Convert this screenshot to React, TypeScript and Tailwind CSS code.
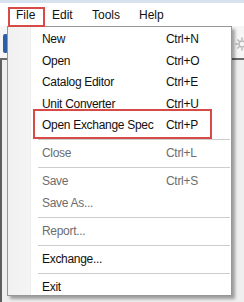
import React from 'react'

type Entry =
  | { kind: 'item'; label: string; shortcut?: string; disabled?: boolean }
  | { kind: 'sep' }

const entries: Entry[] = [
  { kind: 'item', label: 'New', shortcut: 'Ctrl+N' },
  { kind: 'item', label: 'Open', shortcut: 'Ctrl+O' },
  { kind: 'item', label: 'Catalog Editor', shortcut: 'Ctrl+E' },
  { kind: 'item', label: 'Unit Converter', shortcut: 'Ctrl+U' },
  { kind: 'item', label: 'Open Exchange Spec', shortcut: 'Ctrl+P' },
  { kind: 'sep' },
  { kind: 'item', label: 'Close', shortcut: 'Ctrl+L', disabled: true },
  { kind: 'sep' },
  { kind: 'item', label: 'Save', shortcut: 'Ctrl+S', disabled: true },
  { kind: 'item', label: 'Save As...', disabled: true },
  { kind: 'sep' },
  { kind: 'item', label: 'Report...', disabled: true },
  { kind: 'sep' },
  { kind: 'item', label: 'Exchange...' },
  { kind: 'sep' },
  { kind: 'item', label: 'Exit' },
]

function Gear() {
  return (
    <svg width="16" height="16" viewBox="0 0 16 16" fill="none" stroke="#b5b5b5" strokeWidth="1.4">
      <circle cx="8" cy="8" r="3" />
      <path d="M8 1.5v2.5M8 12v2.5M1.5 8H4M12 8h2.5M3.4 3.4l1.8 1.8M10.8 10.8l1.8 1.8M3.4 12.6l1.8-1.8M10.8 5.2l1.8-1.8" />
    </svg>
  )
}

export default function App() {
  return (
    <div
      className="relative w-[244px] h-[302px] overflow-hidden bg-white text-[12px] text-[#111] flex flex-col"
      style={{ fontFamily: '"Liberation Sans", Arial, sans-serif' }}
    >
      {/* window top band */}
      <div className="h-[3px] bg-[#d8e2ee] shrink-0" />

      {/* menu bar */}
      <div className="h-[23px] shrink-0 flex items-center pl-[16px] bg-white">
        <span className="w-[36px]">File</span>
        <span className="w-[40px]">Edit</span>
        <span className="w-[47px]">Tools</span>
        <span>Help</span>
      </div>

      {/* toolbar strip */}
      <div className="h-[32px] shrink-0 flex items-center justify-between bg-[#f6f6f6]">
        <div className="ml-[3px] mt-[2px] w-[5px] h-[19px] rounded-[2px] bg-[#2d5ea6]" />
        <div className="mr-[-6px] mt-[4px]">
          <Gear />
        </div>
      </div>
      <div className="h-[2px] shrink-0 bg-[#6a6a6a]" />

      {/* window body */}
      <div className="flex-1 flex">
        <div className="w-[2px] bg-[#5e5e5e]" />
        <div className="flex-1 bg-[#efefef]" />
      </div>

      {/* dropdown menu */}
      <div className="absolute left-[7px] top-[26px] w-[225px] h-[270px] flex border border-[#979797] bg-white overflow-hidden shadow-[3px_3px_3px_rgba(0,0,0,0.35)]">
        <div className="w-[23px] shrink-0 bg-[linear-gradient(to_right,#f0f0f0,#f5f5f5)] border-r border-[#ececec]" />
        <div className="flex-1 pt-[2px] tracking-[-0.3px]">
          {entries.map((e, i) =>
            e.kind === 'sep' ? (
              <div key={i} className="h-[6.5px] flex items-center ml-[7px] mr-[1px]">
                <div className="h-px w-full bg-[#cdcdcd]" />
              </div>
            ) : (
              <div
                key={i}
                className={`h-[21.5px] leading-[21.5px] flex pl-[11px] ${
                  e.disabled ? 'text-[#6d6d6d]' : 'text-[#111]'
                }`}
              >
                <span className="w-[124px] whitespace-nowrap">{e.label}</span>
                {e.shortcut && <span className="whitespace-nowrap">{e.shortcut}</span>}
              </div>
            )
          )}
        </div>
      </div>

      {/* red annotation boxes */}
      <div className="absolute left-[8px] top-[7px] w-[37px] h-[20px] border-2 border-[#d64b46]" />
      <div className="absolute left-[33px] top-[109px] w-[179px] h-[30px] border-2 border-[#d64b46]" />
    </div>
  )
}
